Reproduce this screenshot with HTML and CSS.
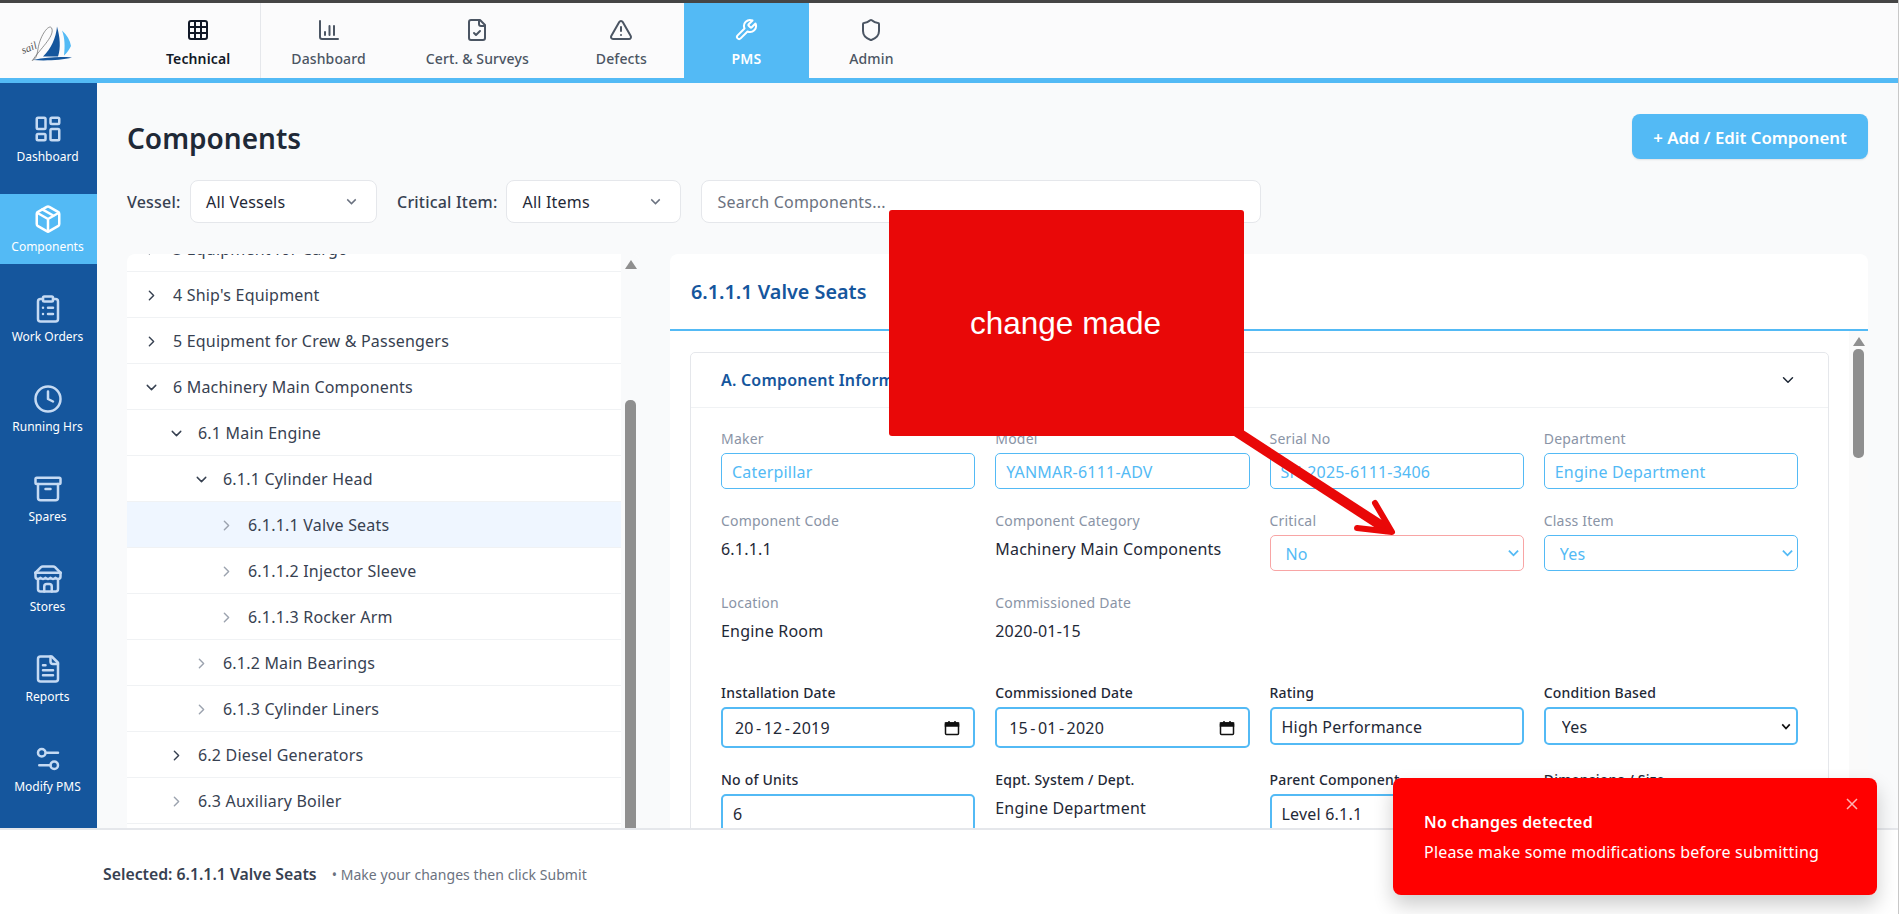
FILE: index.html
```html
<!DOCTYPE html>
<html lang="en">
<head>
  <meta charset="UTF-8">
  <title>Components</title>
  <meta name="viewport" content="width=device-width, initial-scale=1">
  <link rel="stylesheet" href="styles.css">
</head>
<body>
  <header class="topbar">
    <div class="logo">
      <svg width="60" height="44" viewBox="0 0 60 44">
        <path d="M39 7.5C42 18 43 29 40 37.5H25C33 30 38 19 39 7.5Z" fill="#15569d"/>
        <path d="M44 11.5C49 16 52 21 53 27C51 31 49 34 46 36.5C47 28 47 19 44 11.5Z" fill="#53baf5"/>
        <path d="M15 41C28 42 44 41 54 38.5C42 37.5 30 38 15 41Z" fill="#15569d"/>
        <path d="M14 42C22 30 36 18 34 10C32 3 22 16 20 30C19 36 18 40 15 41" fill="none" stroke="#666" stroke-width=".7"/>
        <text class="logo-text" x="5" y="35" transform="rotate(-22 5 35)">sail</text>
      </svg>
    </div>
    <nav class="tabs">
      <a class="tab tab-current">
        <svg class="tab-icon" viewBox="0 0 24 24"><rect x="3" y="3" width="18" height="18" rx="2"/><path d="M3 9h18M3 15h18M9 3v18M15 3v18"/></svg>
        Technical
      </a>
      <a class="tab">
        <svg class="tab-icon" viewBox="0 0 24 24"><path d="M3 3v16a2 2 0 0 0 2 2h16M8 17v-3M12.5 17V8M17 17v-9"/></svg>
        Dashboard
      </a>
      <a class="tab">
        <svg class="tab-icon" viewBox="0 0 24 24"><path d="M15 2H6a2 2 0 0 0-2 2v16a2 2 0 0 0 2 2h12a2 2 0 0 0 2-2V7Z"/><path d="M14 2v4a2 2 0 0 0 2 2h4"/><path d="m9 15 2 2 4-4"/></svg>
        Cert. &amp; Surveys
      </a>
      <a class="tab">
        <svg class="tab-icon" viewBox="0 0 24 24"><path d="m21.73 18-8-14a2 2 0 0 0-3.48 0l-8 14A2 2 0 0 0 4 21h16a2 2 0 0 0 1.73-3"/><path d="M12 9v4M12 17h.01"/></svg>
        Defects
      </a>
      <a class="tab tab-active">
        <svg class="tab-icon" viewBox="0 0 24 24"><path d="M14.7 6.3a1 1 0 0 0 0 1.4l1.6 1.6a1 1 0 0 0 1.4 0l3.77-3.77a6 6 0 0 1-7.94 7.94l-6.91 6.91a2.12 2.12 0 0 1-3-3l6.91-6.91a6 6 0 0 1 7.94-7.94l-3.76 3.76z"/></svg>
        PMS
      </a>
      <a class="tab">
        <svg class="tab-icon" viewBox="0 0 24 24"><path d="M20 13c0 5-3.500 7.500-7.660 8.950a1 1 0 0 1-.67-.01C7.500 20.500 4 18 4 13V6a1 1 0 0 1 1-1c2 0 4.500-1.200 6.240-2.720a1.170 1.170 0 0 1 1.520 0C14.510 3.810 17 5 19 5a1 1 0 0 1 1 1z"/></svg>
        Admin
      </a>
    </nav>
  </header>

  <div class="layout">
    <aside class="sidebar">
      <a class="side-item">
        <svg class="side-icon" viewBox="0 0 24 24"><rect x="3" y="3" width="7" height="9" rx="1"/><rect x="14" y="3" width="7" height="5" rx="1"/><rect x="14" y="12" width="7" height="9" rx="1"/><rect x="3" y="16" width="7" height="5" rx="1"/></svg>
        Dashboard
      </a>
      <a class="side-item side-active">
        <svg class="side-icon" viewBox="0 0 24 24"><path d="M11 21.730a2 2 0 0 0 2 0l7-4A2 2 0 0 0 21 16V8a2 2 0 0 0-1-1.730l-7-4a2 2 0 0 0-2 0l-7 4A2 2 0 0 0 3 8v8a2 2 0 0 0 1 1.730z"/><path d="M12 22V12M3.300 7l8.700 5 8.700-5M7.500 4.270l9 5.150"/></svg>
        Components
      </a>
      <a class="side-item">
        <svg class="side-icon" viewBox="0 0 24 24"><rect x="8" y="2" width="8" height="4" rx="1"/><path d="M16 4h2a2 2 0 0 1 2 2v14a2 2 0 0 1-2 2H6a2 2 0 0 1-2-2V6a2 2 0 0 1 2-2h2"/><path d="M12 11h4M12 16h4M8 11h.01M8 16h.01"/></svg>
        Work Orders
      </a>
      <a class="side-item">
        <svg class="side-icon" viewBox="0 0 24 24"><circle cx="12" cy="12" r="10"/><path d="M12 6v6l4 2"/></svg>
        Running Hrs
      </a>
      <a class="side-item">
        <svg class="side-icon" viewBox="0 0 24 24"><rect x="2" y="3" width="20" height="5" rx="1"/><path d="M4 8v11a2 2 0 0 0 2 2h12a2 2 0 0 0 2-2V8M10 12h4"/></svg>
        Spares
      </a>
      <a class="side-item">
        <svg class="side-icon" viewBox="0 0 24 24"><path d="m2 7 4.410-4.410A2 2 0 0 1 7.830 2h8.340a2 2 0 0 1 1.420.590L22 7"/><path d="M4 12v8a2 2 0 0 0 2 2h12a2 2 0 0 0 2-2v-8"/><path d="M15 22v-4a2 2 0 0 0-2-2h-2a2 2 0 0 0-2 2v4"/><path d="M2 7h20"/><path d="M22 7v3a2 2 0 0 1-2 2 2.700 2.700 0 0 1-2-1 2.700 2.700 0 0 1-2 1 2.700 2.700 0 0 1-2-1 2.700 2.700 0 0 1-2 1 2.700 2.700 0 0 1-2-1 2.700 2.700 0 0 1-2 1 2.700 2.700 0 0 1-2-1 2.700 2.700 0 0 1-2 1 2 2 0 0 1-2-2V7"/></svg>
        Stores
      </a>
      <a class="side-item">
        <svg class="side-icon" viewBox="0 0 24 24"><path d="M15 2H6a2 2 0 0 0-2 2v16a2 2 0 0 0 2 2h12a2 2 0 0 0 2-2V7Z"/><path d="M14 2v4a2 2 0 0 0 2 2h4"/><path d="M10 9H8M16 13H8M16 17H8"/></svg>
        Reports
      </a>
      <a class="side-item">
        <svg class="side-icon" viewBox="0 0 24 24"><path d="M20 7h-9M14 17H5"/><circle cx="17" cy="17" r="3"/><circle cx="7" cy="7" r="3"/></svg>
        Modify PMS
      </a>
    </aside>

    <main class="main">
      <div class="page-head">
        <h1 class="page-title">Components</h1>
        <button class="add-btn">+ Add / Edit Component</button>
      </div>

      <div class="filters">
        <label class="filter-label">Vessel:</label>
        <div class="filter-select filter-vessel">All Vessels
          <svg class="filter-arrow" viewBox="0 0 24 24"><path d="m6 9 6 6 6-6"/></svg>
        </div>
        <label class="filter-label filter-label-critical">Critical Item:</label>
        <div class="filter-select filter-items">All Items
          <svg class="filter-arrow" viewBox="0 0 24 24"><path d="m6 9 6 6 6-6"/></svg>
        </div>
        <div class="filter-search">Search Components...</div>
      </div>

      <div class="panels">
        <section class="tree-panel">
          <div class="tree-clip">
            <div class="tree-list">
              <div class="tree-row lvl-0"><svg class="chev" viewBox="0 0 24 24"><path d="m9 18 6-6-6-6"/></svg>3 Equipment for Cargo</div>
              <div class="tree-row lvl-0"><svg class="chev" viewBox="0 0 24 24"><path d="m9 18 6-6-6-6"/></svg>4 Ship's Equipment</div>
              <div class="tree-row lvl-0"><svg class="chev" viewBox="0 0 24 24"><path d="m9 18 6-6-6-6"/></svg>5 Equipment for Crew &amp; Passengers</div>
              <div class="tree-row lvl-0"><svg class="chev" viewBox="0 0 24 24"><path d="m6 9 6 6 6-6"/></svg>6 Machinery Main Components</div>
              <div class="tree-row lvl-1"><svg class="chev" viewBox="0 0 24 24"><path d="m6 9 6 6 6-6"/></svg>6.1 Main Engine</div>
              <div class="tree-row lvl-2"><svg class="chev" viewBox="0 0 24 24"><path d="m6 9 6 6 6-6"/></svg>6.1.1 Cylinder Head</div>
              <div class="tree-row lvl-3 tree-selected"><svg class="chev chev-muted" viewBox="0 0 24 24"><path d="m9 18 6-6-6-6"/></svg>6.1.1.1 Valve Seats</div>
              <div class="tree-row lvl-3"><svg class="chev chev-muted" viewBox="0 0 24 24"><path d="m9 18 6-6-6-6"/></svg>6.1.1.2 Injector Sleeve</div>
              <div class="tree-row lvl-3"><svg class="chev chev-muted" viewBox="0 0 24 24"><path d="m9 18 6-6-6-6"/></svg>6.1.1.3 Rocker Arm</div>
              <div class="tree-row lvl-2"><svg class="chev chev-muted" viewBox="0 0 24 24"><path d="m9 18 6-6-6-6"/></svg>6.1.2 Main Bearings</div>
              <div class="tree-row lvl-2"><svg class="chev chev-muted" viewBox="0 0 24 24"><path d="m9 18 6-6-6-6"/></svg>6.1.3 Cylinder Liners</div>
              <div class="tree-row lvl-1"><svg class="chev" viewBox="0 0 24 24"><path d="m9 18 6-6-6-6"/></svg>6.2 Diesel Generators</div>
              <div class="tree-row lvl-1"><svg class="chev chev-muted" viewBox="0 0 24 24"><path d="m9 18 6-6-6-6"/></svg>6.3 Auxiliary Boiler</div>
              <div class="tree-row lvl-1"></div>
            </div>
          </div>
          <div class="scroll-track">
            <div class="scroll-up"></div>
            <div class="scroll-thumb tree-thumb"></div>
          </div>
        </section>

        <section class="detail-panel">
          <h2 class="detail-title">6.1.1.1 Valve Seats</h2>
          <div class="detail-body">
            <div class="detail-scroll">
              <div class="card">
                <div class="card-head">
                  <h3 class="card-title">A. Component Information</h3>
                  <svg class="card-chev" viewBox="0 0 24 24"><path d="m6 9 6 6 6-6"/></svg>
                </div>
                <div class="card-body">
                  <div class="field-grid">
                    <div class="field">
                      <div class="field-label">Maker</div>
                      <input class="edit-input" type="text" value="Caterpillar">
                    </div>
                    <div class="field">
                      <div class="field-label">Model</div>
                      <input class="edit-input" type="text" value="YANMAR-6111-ADV">
                    </div>
                    <div class="field">
                      <div class="field-label">Serial No</div>
                      <input class="edit-input" type="text" value="SN-2025-6111-3406">
                    </div>
                    <div class="field">
                      <div class="field-label">Department</div>
                      <input class="edit-input" type="text" value="Engine Department">
                    </div>
                    <div class="field">
                      <div class="field-label">Component Code</div>
                      <div class="field-value">6.1.1.1</div>
                    </div>
                    <div class="field">
                      <div class="field-label">Component Category</div>
                      <div class="field-value">Machinery Main Components</div>
                    </div>
                    <div class="field">
                      <div class="field-label">Critical</div>
                      <select class="edit-input edit-select edit-changed"><option>No</option><option>Yes</option></select>
                    </div>
                    <div class="field">
                      <div class="field-label">Class Item</div>
                      <select class="edit-input edit-select"><option>Yes</option><option>No</option></select>
                    </div>
                    <div class="field">
                      <div class="field-label">Location</div>
                      <div class="field-value">Engine Room</div>
                    </div>
                    <div class="field">
                      <div class="field-label">Commissioned Date</div>
                      <div class="field-value">2020-01-15</div>
                    </div>
                  </div>

                  <div class="field-grid form-grid">
                    <div class="field">
                      <div class="form-label">Installation Date</div>
                      <div class="form-input date-input">
                        <span>20<span class="date-sep">-</span>12<span class="date-sep">-</span>2019</span>
                        <svg class="cal-icon" viewBox="0 0 16 16"><rect x="1.500" y="3" width="13" height="11.500" rx="1"/><path class="cal-band" d="M1.500 3h13v3h-13z"/><path d="M5 1v2M11 1v2"/></svg>
                      </div>
                    </div>
                    <div class="field">
                      <div class="form-label">Commissioned Date</div>
                      <div class="form-input date-input">
                        <span>15<span class="date-sep">-</span>01<span class="date-sep">-</span>2020</span>
                        <svg class="cal-icon" viewBox="0 0 16 16"><rect x="1.500" y="3" width="13" height="11.500" rx="1"/><path class="cal-band" d="M1.500 3h13v3h-13z"/><path d="M5 1v2M11 1v2"/></svg>
                      </div>
                    </div>
                    <div class="field">
                      <div class="form-label">Rating</div>
                      <input class="form-input" type="text" value="High Performance">
                    </div>
                    <div class="field">
                      <div class="form-label">Condition Based</div>
                      <select class="form-input form-select"><option>Yes</option><option>No</option></select>
                    </div>
                    <div class="field">
                      <div class="form-label">No of Units</div>
                      <input class="form-input" type="text" value="6">
                    </div>
                    <div class="field">
                      <div class="form-label">Eqpt. System / Dept.</div>
                      <div class="field-value">Engine Department</div>
                    </div>
                    <div class="field">
                      <div class="form-label">Parent Component</div>
                      <input class="form-input" type="text" value="Level 6.1.1">
                    </div>
                    <div class="field">
                      <div class="form-label">Dimensions / Size</div>
                      <input class="form-input" type="text" value="">
                    </div>
                  </div>
                </div>
              </div>
            </div>
            <div class="scroll-track detail-track">
              <div class="scroll-up"></div>
              <div class="scroll-thumb detail-thumb"></div>
            </div>
          </div>
        </section>
      </div>
    </main>
  </div>

  <footer class="footer">
    <strong class="footer-selected">Selected: 6.1.1.1 Valve Seats</strong>
    <span class="footer-hint">• Make your changes then click Submit</span>
  </footer>

  <!-- annotation drawn on top of the screenshot -->
  <svg class="note-arrow" viewBox="0 0 1899 914">
    <path class="note-shaft" d="M1237 432L1388 530"/>
    <path class="note-head" d="M1375 503L1392 532L1357 528"/>
  </svg>
  <div class="note-box">change made</div>

  <div class="toast">
    <svg class="toast-close" viewBox="0 0 12 12"><path d="M1 1l10 10M11 1L1 11"/></svg>
    <div class="toast-title">No changes detected</div>
    <div class="toast-msg">Please make some modifications before submitting</div>
  </div>
</body>
</html>
```

FILE: styles.css
```css
* {
  box-sizing: border-box;
}
html, body {
  height: 100%;
}
body {
  margin: 0;
  font-family: "Noto Sans", Arial, sans-serif;
  letter-spacing: 0.2px;
  background: #f9fafb;
  color: #1f2937;
  display: flex;
  flex-direction: column;
  overflow: hidden;
  position: relative;
  border-right: 1px solid #c8c8c8;
}

/* top tabs */
.topbar {
  display: flex;
  height: 83px;
  flex-shrink: 0;
  background: #fbfbfc;
  border-top: 3px solid #454545;
  border-bottom: 5px solid #53baf5;
}
.logo {
  width: 136px;
  padding-left: 18px;
  display: flex;
  align-items: center;
}
.logo-text {
  font-family: "Liberation Serif", serif;
  font-style: italic;
  font-size: 11px;
  letter-spacing: 0;
  fill: #555;
}
.tabs {
  display: flex;
}
.tab {
  min-width: 125px;
  padding: 15px 30px 0;
  display: flex;
  flex-direction: column;
  align-items: center;
  gap: 7px;
  font-size: 14px;
  line-height: 20px;
  letter-spacing: 0.12px;
  font-weight: 500;
  color: #4b5563;
  white-space: nowrap;
}
.tab-icon {
  width: 24px;
  height: 24px;
  fill: none;
  stroke: currentColor;
  stroke-width: 2;
  stroke-linecap: round;
  stroke-linejoin: round;
}
.tab-current {
  color: #111827;
  font-weight: 600;
  border-right: 1px solid #e5e7eb;
}
.tab-active {
  background: #53baf5;
  color: #fff;
  font-weight: 600;
}

/* layout */
.layout {
  flex: 1;
  display: flex;
  min-height: 0;
}
.sidebar {
  width: 97px;
  flex-shrink: 0;
  background: #15569d;
  padding-top: 21px;
  display: flex;
  flex-direction: column;
  gap: 20px;
  overflow: hidden;
}
.side-item {
  height: 70px;
  flex-shrink: 0;
  padding: 1px 2px 0 0;
  display: flex;
  flex-direction: column;
  align-items: center;
  justify-content: center;
  gap: 5px;
  font-size: 12px;
  line-height: 16px;
  letter-spacing: 0;
  color: #fff;
}
.side-icon {
  width: 30px;
  height: 30px;
  fill: none;
  stroke: #c5daf3;
  stroke-width: 2;
  stroke-linecap: round;
  stroke-linejoin: round;
}
.side-active {
  background: #53baf5;
}
.side-active .side-icon {
  stroke: #fff;
}

.main {
  flex: 1;
  min-width: 0;
  padding: 31px 30px 0;
  display: flex;
  flex-direction: column;
  overflow: hidden;
}
.page-head {
  display: flex;
  justify-content: space-between;
  align-items: center;
  height: 45px;
}
.page-title {
  margin: 0;
  padding-top: 2px;
  font-size: 28px;
  font-weight: 600;
  letter-spacing: 0;
  color: #1f2937;
}
.add-btn {
  width: 236px;
  height: 45px;
  padding: 2px 0 0;
  border: none;
  border-radius: 8px;
  background: #53baf5;
  color: #fff;
  font-family: inherit;
  font-size: 16.8px;
  font-weight: 600;
  box-shadow: 0 1px 2px rgba(0,0,0,0.1);
}

/* filters */
.filters {
  margin-top: 21px;
  height: 43px;
  display: flex;
  align-items: center;
}
.filter-label {
  font-size: 16px;
  font-weight: 500;
  color: #374151;
  margin-right: 9.5px;
}
.filter-label-critical {
  margin-left: 20px;
  margin-right: 9px;
}
.filter-select {
  height: 43px;
  display: flex;
  align-items: center;
  justify-content: space-between;
  padding: 0 16px 0 15px;
  background: #fff;
  border: 1px solid #e5e7eb;
  border-radius: 8px;
  font-size: 16px;
  color: #1f2937;
}
.filter-vessel {
  width: 187px;
}
.filter-items {
  width: 175px;
}
.filter-arrow {
  width: 17px;
  height: 17px;
  fill: none;
  stroke: #6b7280;
  stroke-width: 2;
}
.filter-search {
  margin-left: 20px;
  width: 560px;
  height: 43px;
  display: flex;
  align-items: center;
  padding: 0 15px;
  background: #fff;
  border: 1px solid #e5e7eb;
  border-radius: 8px;
  font-size: 16px;
  color: #6b7280;
}

/* panels */
.panels {
  margin-top: 31px;
  flex: 1;
  min-height: 0;
  display: flex;
  gap: 30px;
}
.tree-panel {
  width: 513px;
  flex-shrink: 0;
  display: flex;
  background: #fff;
  border-radius: 8px 8px 0 0;
  overflow: hidden;
}
.tree-clip {
  flex: 1;
  overflow: hidden;
}
.tree-list {
  margin-top: -28px;
}
.tree-row {
  height: 46px;
  padding-top: 1px;
  display: flex;
  align-items: center;
  gap: 13px;
  font-size: 16px;
  color: #374151;
  border-bottom: 1px solid #f0f2f4;
}
.lvl-0 { padding-left: 16px; }
.lvl-1 { padding-left: 41px; }
.lvl-2 { padding-left: 66px; }
.lvl-3 { padding-left: 91px; }
.tree-selected {
  background: #eff6ff;
}
.chev {
  width: 17px;
  height: 17px;
  flex-shrink: 0;
  fill: none;
  stroke: #374151;
  stroke-width: 2;
  stroke-linecap: round;
  stroke-linejoin: round;
}
.chev-muted {
  stroke: #9ca3af;
}
.scroll-track {
  width: 19px;
  flex-shrink: 0;
  background: #f9fafb;
  display: flex;
  flex-direction: column;
  align-items: center;
}
.scroll-up {
  margin-top: 6px;
  width: 0;
  height: 0;
  border-left: 6px solid transparent;
  border-right: 6px solid transparent;
  border-bottom: 9px solid #8f8f8f;
}
.scroll-thumb {
  width: 11px;
  background: #8f8f8f;
  border-radius: 5px;
}
.tree-thumb {
  margin-top: 131px;
  flex: 1;
  border-radius: 5px 5px 0 0;
}

.detail-panel {
  flex: 1;
  min-width: 0;
  background: #fff;
  border-radius: 8px 8px 0 0;
  display: flex;
  flex-direction: column;
  overflow: hidden;
}
.detail-title {
  margin: 0;
  height: 77px;
  flex-shrink: 0;
  display: flex;
  align-items: center;
  padding: 0 21px 0;
  font-size: 19.8px;
  font-weight: 600;
  letter-spacing: 0;
  color: #15569d;
  border-bottom: 2px solid #53baf5;
}
.detail-body {
  flex: 1;
  min-height: 0;
  display: flex;
}
.detail-scroll {
  flex: 1;
  min-width: 0;
  padding: 21px 20px 0;
  overflow: hidden;
}
.detail-track {
  background: #fafafa;
}
.detail-thumb {
  margin-top: 3px;
  height: 109px;
}

.card {
  border: 1px solid #e5e7eb;
  border-radius: 5px;
  background: #fff;
}
.card-head {
  height: 55px;
  display: flex;
  align-items: center;
  justify-content: space-between;
  padding: 0 30px;
  border-bottom: 1px solid #f0f2f4;
}
.card-title {
  margin: 0;
  font-size: 16px;
  font-weight: 600;
  color: #15569d;
}
.card-chev {
  width: 18px;
  height: 18px;
  fill: none;
  stroke: #1f2937;
  stroke-width: 2;
  stroke-linecap: round;
  stroke-linejoin: round;
  margin-right: 1px;
}
.card-body {
  padding: 21px 30px 30px;
}
.field-grid {
  display: grid;
  grid-template-columns: repeat(4, 1fr);
  gap: 22px 20px;
}
.field {
  min-width: 0;
  min-height: 60px;
}
.field-label {
  font-size: 14px;
  line-height: 20px;
  color: #8a94a6;
  margin-bottom: 4px;
}
.field-value {
  font-size: 16px;
  line-height: 28px;
  color: #1f2937;
}
.edit-input {
  display: block;
  width: 100%;
  height: 36px;
  padding: 2px 10px 0;
  background: #fff;
  border: 1px solid #53baf5;
  border-radius: 5px;
  font-family: inherit;
  font-size: 16px;
  letter-spacing: inherit;
  color: #53baf5;
}
.edit-select {
  appearance: none;
  padding-left: 15px;
  background: #fff url("data:image/svg+xml,%3Csvg xmlns='http://www.w3.org/2000/svg' viewBox='0 0 12 8'%3E%3Cpath d='M1 1.500l5 5 5-5' fill='none' stroke='%2353baf5' stroke-width='2'/%3E%3C/svg%3E") no-repeat right 4px center / 11px 8px;
}
.edit-changed {
  border-color: #f8a5a5;
}
.form-grid {
  margin-top: 30px;
}
.form-label {
  font-size: 14px;
  line-height: 20px;
  font-weight: 500;
  color: #1f2937;
  margin-bottom: 4px;
}
.form-input {
  display: block;
  width: 100%;
  height: 38px;
  padding: 2px 10px 0;
  background: #fff;
  border: 2px solid #53baf5;
  border-radius: 5px;
  font-family: inherit;
  font-size: 16px;
  letter-spacing: inherit;
  color: #1f2937;
}
.form-select {
  appearance: none;
  padding-left: 16px;
  background: #fff url("data:image/svg+xml,%3Csvg xmlns='http://www.w3.org/2000/svg' viewBox='0 0 12 8'%3E%3Cpath d='M1.500 1.500l4.500 5 4.500-5' fill='none' stroke='%23111' stroke-width='2'/%3E%3C/svg%3E") no-repeat right 5px center / 10px 7px;
}
.date-input {
  height: 41px;
  display: flex;
  align-items: center;
  justify-content: space-between;
  padding: 1px 13px 0 12px;
}
.date-sep {
  margin: 0 2.3px;
}
.cal-icon {
  width: 16px;
  height: 16px;
  fill: none;
  stroke: #111;
  stroke-width: 1.5;
}
.cal-band {
  fill: #111;
}

/* footer */
.footer {
  height: 86px;
  flex-shrink: 0;
  background: #fff;
  border-top: 2px solid #e5e7eb;
  padding: 4px 0 0 103px;
  display: flex;
  align-items: center;
  gap: 15px;
  position: relative;
}
.footer-selected {
  font-size: 15.8px;
  font-weight: 600;
  letter-spacing: 0;
  color: #374151;
}
.footer-hint {
  font-size: 14px;
  letter-spacing: 0.05px;
  color: #6b7280;
}

/* overlays */
.note-arrow {
  position: absolute;
  left: 0;
  top: 0;
  width: 1899px;
  height: 914px;
  pointer-events: none;
}
.note-shaft {
  fill: none;
  stroke: #e90808;
  stroke-width: 10;
}
.note-head {
  fill: none;
  stroke: #e90808;
  stroke-width: 6;
  stroke-linecap: round;
  stroke-linejoin: round;
}
.note-box {
  position: absolute;
  left: 889px;
  top: 210px;
  width: 355px;
  height: 226px;
  padding-right: 2px;
  display: flex;
  align-items: center;
  justify-content: center;
  background: #e90808;
  border-radius: 3px;
  font-family: "Liberation Sans", Arial, sans-serif;
  font-size: 31.5px;
  letter-spacing: 0;
  color: #fff;
}
.toast {
  position: absolute;
  left: 1393px;
  top: 778px;
  width: 484px;
  height: 117px;
  padding: 31px 31px 0;
  background: #ff0000;
  border-radius: 8px;
  color: #fff;
  box-shadow: 0 10px 20px rgba(0,0,0,0.2);
}
.toast-title {
  font-size: 16px;
  line-height: 26px;
  font-weight: 600;
}
.toast-msg {
  margin-top: 4px;
  font-size: 16px;
  line-height: 26px;
}
.toast-close {
  position: absolute;
  right: 19px;
  top: 20px;
  width: 12px;
  height: 12px;
  fill: none;
  stroke: #ffb3b3;
  stroke-width: 1.500;
}
```
